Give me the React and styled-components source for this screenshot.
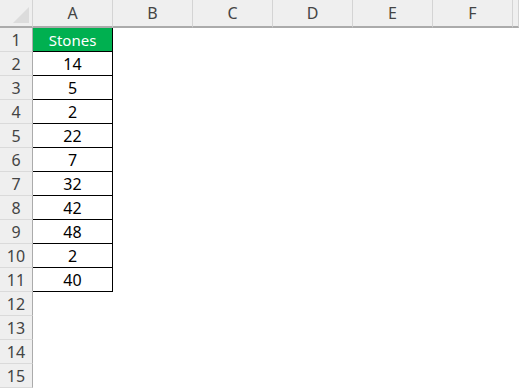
import styled, { createGlobalStyle } from "styled-components";

const GlobalStyle = createGlobalStyle`
  html, body {
    margin: 0;
    padding: 0;
    background: #ffffff;
    overflow: hidden;
  }
`;

const columns = ["A", "B", "C", "D", "E", "F"];
const values = [14, 5, 2, 22, 7, 32, 42, 48, 2, 40];
const rowCount = 15;

const Sheet = styled.div`
  display: grid;
  grid-template-columns: 33px repeat(6, 80px) 1fr;
  grid-auto-rows: 24px;
  grid-template-rows: 28px;
  width: 519px;
  height: 391px;
  font-family: "Noto Sans", "Liberation Sans", sans-serif;
  font-size: 15px;
  color: #000;
`;

const Corner = styled.div`
  background: #efefef;
  border-right: 1px solid #d4d4d4;
  border-bottom: 2px solid #ababab;
  position: relative;

  &::after {
    content: "";
    position: absolute;
    right: 3px;
    bottom: 3px;
    width: 0;
    height: 0;
    border-left: 16px solid transparent;
    border-bottom: 16px solid #dcdcdc;
  }
`;

const ColHead = styled.div`
  background: #efefef;
  border-right: 1px solid #d4d4d4;
  border-bottom: 2px solid #ababab;
  display: flex;
  align-items: center;
  justify-content: center;
  color: #444;
  font-size: 16px;
`;

const RowHead = styled.div`
  background: #efefef;
  border-right: 1px solid #ababab;
  border-bottom: 1px solid #dadada;
  display: flex;
  align-items: center;
  justify-content: center;
  color: #444;
  font-size: 16px;
`;

const Cell = styled.div`
  display: flex;
  align-items: center;
  justify-content: center;
  box-sizing: border-box;
  background: ${(p) => (p.$head ? "#00b050" : "#fff")};
  color: ${(p) => (p.$head ? "#fff" : "#000")};
  font-size: ${(p) => (p.$head ? "15px" : "16px")};
  border-right: ${(p) => (p.$boxed ? "1px solid #000" : "none")};
  border-bottom: ${(p) => (p.$boxed ? "1px solid #000" : "none")};
`;

export default function App() {
  const rows = [];
  for (let r = 1; r <= rowCount; r++) {
    rows.push(<RowHead key={`h${r}`}>{r}</RowHead>);
    let content = "";
    if (r === 1) content = "Stones";
    else if (r - 2 < values.length) content = values[r - 2];
    const boxed = r <= values.length + 1;
    rows.push(
      <Cell key={`a${r}`} $head={r === 1} $boxed={boxed}>
        {content}
      </Cell>
    );
    for (let c = 1; c < columns.length; c++) {
      rows.push(<Cell key={`c${r}-${c}`} />);
    }
    rows.push(<Cell key={`x${r}`} />);
  }

  return (
    <>
      <GlobalStyle />
      <Sheet>
        <Corner />
        {columns.map((c) => (
          <ColHead key={c}>{c}</ColHead>
        ))}
        <ColHead />
        {rows}
      </Sheet>
    </>
  );
}
